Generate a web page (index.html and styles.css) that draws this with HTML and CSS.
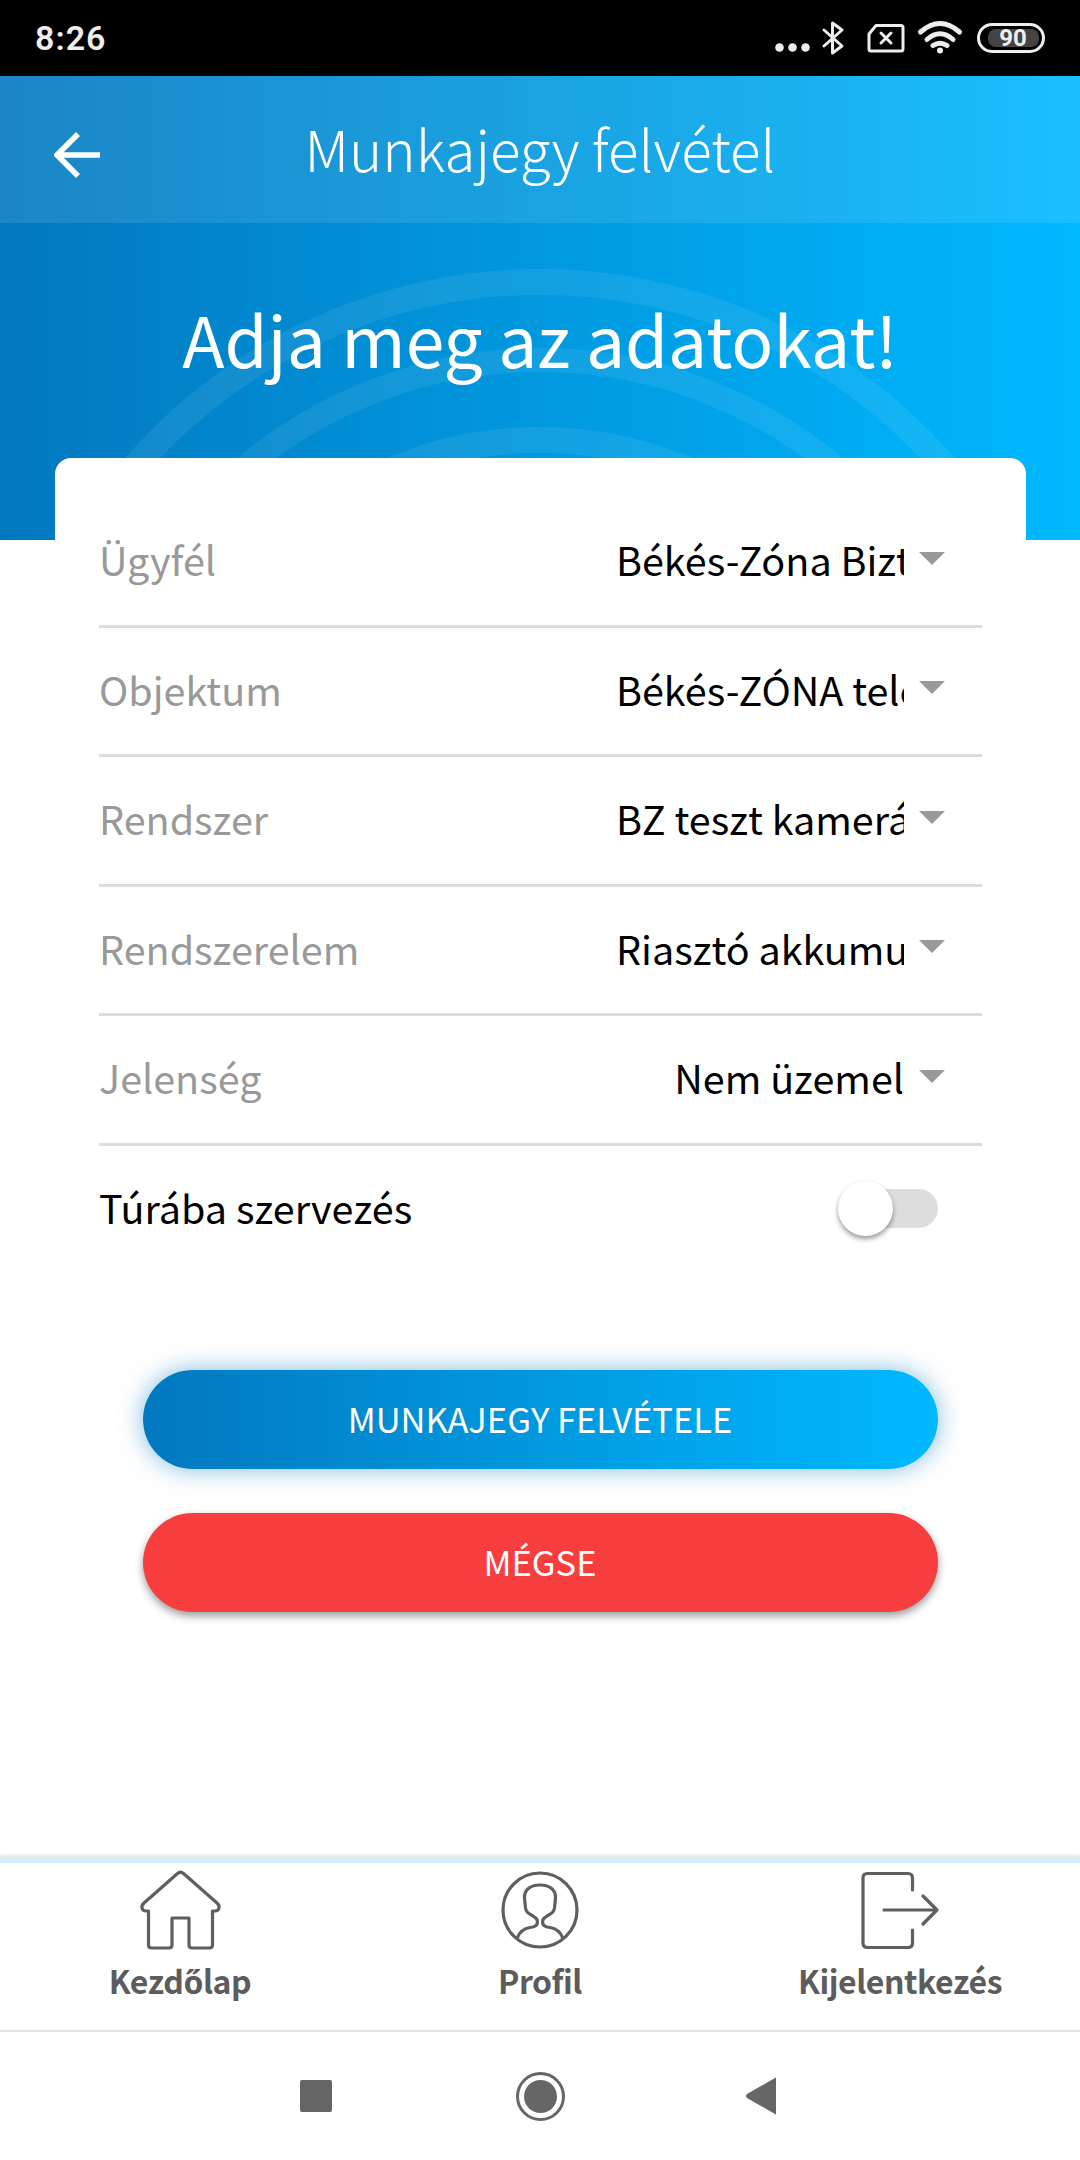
FILE: index.html
```html
<!DOCTYPE html>
<html lang="hu">
<head>
<meta charset="utf-8">
<title>Munkajegy felvétel</title>
<link rel="stylesheet" href="styles.css">
</head>
<body>
<div class="screen">
  <div class="status">
    <span class="time">8:26</span>
    <svg class="status-icons" width="280" height="76" viewBox="770 0 280 76">
      <g fill="#eee"><circle cx="779.5" cy="47.5" r="4.3"/><circle cx="792.5" cy="47.5" r="4.3"/><circle cx="805.5" cy="47.5" r="4.3"/></g>
      <path class="st" d="M824 30 L842 46 L832.5 53 V23 L842 30 L824 46"/>
      <path class="st" d="M876 25.5 H901 Q903 25.5 903 27.5 V49 Q903 51 901 51 H871 Q869 51 869 49 V34 Z"/>
      <path class="st" d="M881 33 L891 43 M891 33 L881 43"/>
      <path class="st w" d="M920.5 32 Q940 15 959.5 32 M927 39.5 Q940 28 953 39.5"/>
      <path class="st w" d="M933 45.5 Q940 41 947 45.5"/>
      <circle cx="940" cy="50.5" r="3" fill="#eee"/>
      <rect class="st" x="978.5" y="24.5" width="65" height="27" rx="13.5"/>
      <rect x="988" y="29" width="51" height="18" rx="8" fill="#444"/>
      <text class="batt" x="1013" y="46" text-anchor="middle">90</text>
    </svg>
  </div>

  <section class="hero">
    <svg class="rings" width="1080" height="464" viewBox="0 76 1080 464">
      <circle cx="540" cy="819" r="537" stroke-width="26"/>
      <circle cx="540" cy="819" r="459" stroke-width="24"/>
      <circle cx="540" cy="819" r="379" stroke-width="26"/>
    </svg>
    <header class="appbar">
      <svg class="back" width="48" height="46" viewBox="0 0 48 46"><path d="M46 23 H4 M24 2 L3 23 L24 44"/></svg>
      <h1 class="appbar-title">Munkajegy felvétel</h1>
    </header>
    <h2 class="hero-title">Adja meg az adatokat!</h2>
  </section>

  <main class="card">
    <div class="row">
      <span class="label">Ügyfél</span>
      <span class="value">Békés-Zóna Biztonságtechnika</span>
      <span class="caret"></span>
    </div>
    <div class="row">
      <span class="label">Objektum</span>
      <span class="value">Békés-ZÓNA telephely</span>
      <span class="caret"></span>
    </div>
    <div class="row">
      <span class="label">Rendszer</span>
      <span class="value">BZ teszt kamerás rendszer</span>
      <span class="caret"></span>
    </div>
    <div class="row">
      <span class="label">Rendszerelem</span>
      <span class="value">Riasztó akkumulátor</span>
      <span class="caret"></span>
    </div>
    <div class="row">
      <span class="label">Jelenség</span>
      <span class="value">Nem üzemel</span>
      <span class="caret"></span>
    </div>
    <div class="row row-toggle">
      <span class="toggle-label">Túrába szervezés</span>
      <span class="toggle"><span class="knob"></span></span>
    </div>
  </main>

  <div class="actions">
    <button class="btn btn-primary">MUNKAJEGY FELVÉTELE</button>
    <button class="btn btn-danger">MÉGSE</button>
  </div>

  <nav class="tabs">
    <a class="tab">
      <svg class="tab-icon" width="100" height="90" viewBox="0 0 100 90"><path d="M47.5 6.5 L14 36 C10.5 39 11.5 44 16 44 H18.5 V78 Q18.5 81 21.5 81 H39 Q42 81 42 78 V51 H59 V78 Q59 81 62 81 H79.5 Q82.5 81 82.5 78 V44 H85 C89.5 44 90.5 39 87 36 L53.5 6.5 Q50.5 4 47.5 6.5 Z"/></svg>
      <span class="tab-label">Kezdőlap</span>
    </a>
    <a class="tab">
      <svg class="tab-icon" width="100" height="90" viewBox="0 0 100 90"><circle cx="50" cy="43" r="37"/><path d="M27.5 70.5 C30 64 34 61.5 40 60.5 C45 60 47.5 58 47.5 55 C47.5 52 46 51 43 49 C38.5 46.5 36 45 35.5 41 L34.5 31 C34 23 40 18 50 18 C60 18 66 23 65.5 31 L64.5 41 C64 45 61.5 46.5 57 49 C54 51 52.5 52 52.5 55 C52.5 58 55 60 60 60.5 C66 61.5 70 64 72.5 70.5"/></svg>
      <span class="tab-label">Profil</span>
    </a>
    <a class="tab">
      <svg class="tab-icon" width="100" height="90" viewBox="0 0 100 90"><path d="M62.5 23 V11 Q62.5 6.5 58 6.5 H17.5 Q13 6.5 13 11 V76 Q13 80.5 17.5 80.5 H58 Q62.5 80.5 62.5 76 V63 M34 43 H87 M73 29 L87 43 L73 57"/></svg>
      <span class="tab-label">Kijelentkezés</span>
    </a>
  </nav>

  <div class="sysnav">
    <span class="sys-slot"><span class="sys-square"></span></span>
    <span class="sys-slot"><span class="sys-home"><span class="sys-dot"></span></span></span>
    <span class="sys-slot"><svg class="sys-tri" width="32" height="38" viewBox="0 0 32 38"><path class="sys-back" d="M31 1 V37 Q31 38 30 37 L2 21 Q0 19 2 17 L30 1 Q31 0 31 1 Z"/></svg></span>
  </div>
</div>
</body>
</html>
```

FILE: styles.css
```css
* { box-sizing: border-box; }
html, body { margin: 0; padding: 0; background: #fff; }
body { font-family: "Noto Sans CJK SC", "Noto Sans", sans-serif; }
.screen { width: 1080px; height: 2160px; display: flex; flex-direction: column; overflow: hidden; background: #fff; }

.status { height: 76px; background: #000; display: flex; align-items: center; justify-content: space-between; flex: none; }
.time { font-family: Roboto, sans-serif; font-weight: 600; font-size: 34px; letter-spacing: 1px; color: #eee; margin-left: 35px; }
.status-icons { display: block; margin-right: 30px; }
.st { fill: none; stroke: #eee; stroke-width: 3; stroke-linejoin: round; stroke-linecap: round; }
.st.w { stroke-width: 5; }
.batt { font-family: Roboto, sans-serif; font-weight: 700; font-size: 24px; fill: #eee; }

.hero { height: 464px; flex: none; position: relative; overflow: hidden; background: linear-gradient(90deg, #0278bf, #00b9ff); }
.rings { position: absolute; left: 0; top: 0; }
.rings circle { fill: none; stroke: #fff; stroke-opacity: .075; }
.appbar { position: relative; height: 147px; padding-bottom: 6px; background: rgba(255, 255, 255, .1); display: flex; align-items: center; justify-content: center; }
.back { position: absolute; left: 54px; top: 56px; fill: none; stroke: #fff; stroke-width: 5.5; }
.appbar-title { margin: 0; font-weight: 300; font-size: 56.5px; line-height: 80px; color: #fff; }
.hero-title { position: relative; margin: 60px 0 0; text-align: center; font-weight: 400; font-size: 69.5px; line-height: 110px; color: #fff; }

.card { position: relative; margin: -82px 54px 0 55px; padding: 40px 44px 0; background: #fff; border-radius: 16px 16px 0 0; flex: none; }
.row { height: 129.5px; padding-bottom: 5px; display: flex; align-items: center; border-bottom: 3px solid #ddd; font-size: 39.5px; }
.label { flex: 1; color: #999; }
.value { width: 288px; margin-right: 15px; white-space: nowrap; overflow: hidden; text-align: right; color: #000; }
.caret { width: 0; height: 0; margin-right: 37px; margin-top: -1px; border-left: 13px solid transparent; border-right: 13px solid transparent; border-top: 13px solid #999; }
.row-toggle { border-bottom: 0; height: 126px; justify-content: space-between; }
.toggle-label { color: #000; }
.toggle { position: relative; width: 72px; height: 39px; margin-right: 44px; margin-top: 5px; background: #ddd; border-radius: 20px; }
.knob { position: absolute; left: -28px; top: -8px; width: 55px; height: 55px; border-radius: 50%; background: #fff; box-shadow: 0 3px 5px rgba(0, 0, 0, .4); }

.actions { flex: 1; display: flex; flex-direction: column; align-items: center; gap: 44px; padding-top: 98.5px; }
.btn { width: 795px; height: 99px; padding: 0 0 4px; border: 0; border-radius: 50px; color: #fff; font-family: inherit; font-size: 34.5px; font-weight: 400; }
.btn-primary { background: linear-gradient(90deg, #0278bf, #00b9ff); box-shadow: 0 0 24px rgba(2, 120, 191, .5); }
.btn-danger { background: #f73e3e; box-shadow: 0 4px 8px rgba(0, 0, 0, .4); }

.tabs { flex: none; height: 175px; display: flex; border-bottom: 2px solid #e5e5e5; border-top: 6px solid #d2f0fc; box-shadow: 0 -2px 3px rgba(0, 0, 0, .1); }
.tab { width: 360px; display: flex; flex-direction: column; align-items: center; }
.tab-icon { display: block; margin-top: 4px; fill: none; stroke: #5f5f5f; stroke-width: 3.2; stroke-linejoin: round; stroke-linecap: round; }
.tab-label { font-size: 32px; font-weight: 700; letter-spacing: -.45px; line-height: 48px; margin-top: -1px; color: #5c5c5c; }

.sysnav { flex: none; height: 128px; display: flex; align-items: center; justify-content: center; background: #fff; }
.sys-slot { width: 224px; display: flex; align-items: center; justify-content: center; }
.sys-square { width: 32px; height: 32px; border-radius: 2px; background: #666; }
.sys-home { width: 49px; height: 49px; border: 3px solid #666; border-radius: 50%; display: flex; align-items: center; justify-content: center; }
.sys-dot { width: 33px; height: 33px; border-radius: 50%; background: #666; }
.sys-tri { margin-right: 7px; }
.sys-back { fill: #666; }
```
